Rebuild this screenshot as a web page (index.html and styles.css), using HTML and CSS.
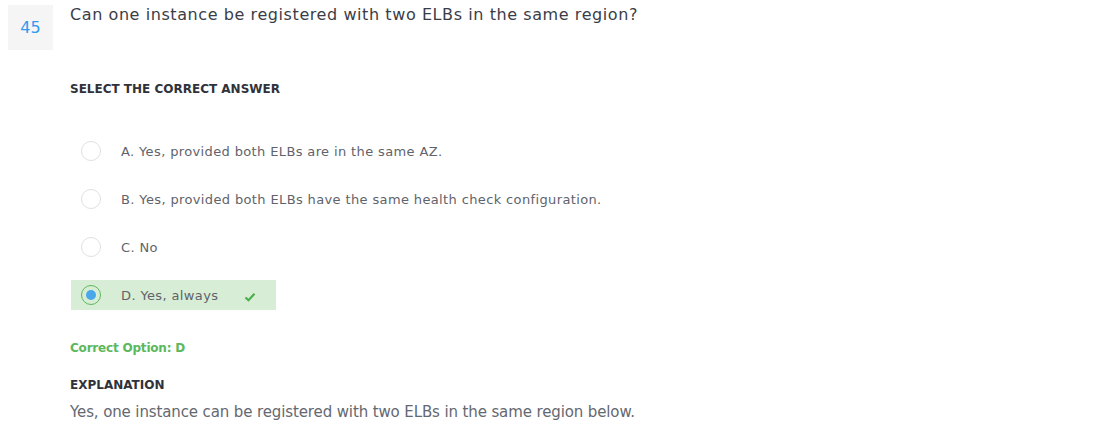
FILE: index.html
```html
<!DOCTYPE html>
<html>
<head>
<meta charset="utf-8">
<link rel="stylesheet" href="styles.css">
</head>
<body>
<div class="question">
  <div class="qnum">45</div>
  <div class="qbody">
    <div class="qtext">Can one instance be registered with two ELBs in the same region?</div>
    <div class="label select-label">SELECT THE CORRECT ANSWER</div>
    <ul class="options">
      <li class="option"><span class="radio"></span><span class="otext">A. Yes, provided both ELBs are in the same AZ.</span></li>
      <li class="option"><span class="radio"></span><span class="otext">B. Yes, provided both ELBs have the same health check configuration.</span></li>
      <li class="option"><span class="radio"></span><span class="otext">C. No</span></li>
      <li class="option correct"><span class="radio checked"><span class="dot"></span></span><span class="otext">D. Yes, always</span>
        <svg class="check" width="12" height="10" viewBox="0 0 12 10"><path d="M1.5 5.5 L4.5 8.3 L10.5 1.8" fill="none" stroke="#4cae4c" stroke-width="2.2"/></svg>
      </li>
    </ul>
    <div class="correct-opt">Correct Option: D</div>
    <div class="label expl-label">EXPLANATION</div>
    <div class="expl">Yes, one instance can be registered with two ELBs in the same region below.</div>
  </div>
</div>
</body>
</html>
```
FILE: styles.css
```css
* { box-sizing: border-box; }
body {
  margin: 0;
  background: #fff;
  font-family: "DejaVu Sans", sans-serif;
}
.question {
  display: flex;
  padding: 5px 0 0 8px;
}
.qnum {
  width: 45px;
  height: 45px;
  background: #f5f5f5;
  color: #3399ee;
  font-size: 16px;
  display: flex;
  align-items: center;
  justify-content: center;
  flex: none;
}
.qbody {
  margin-left: 17px;
}
.qtext {
  font-size: 16px;
  letter-spacing: 0.58px;
  color: #3a3d48;
  line-height: 20px;
}
.label {
  font-size: 12px;
  font-weight: 700;
  color: #2f323a;
}
.select-label {
  margin-top: 56px;
  line-height: 16px;
}
.options {
  list-style: none;
  margin: 39px 0 0 1px;
  padding: 0;
}
.option {
  display: flex;
  align-items: center;
  height: 30px;
  margin-bottom: 18px;
  padding-left: 10px;
  font-size: 13px;
  letter-spacing: 0.37px;
  color: #5f636b;
}
.option.correct {
  background: #d8edd5;
  width: 205px;
}
.radio {
  width: 20px;
  height: 20px;
  border: 1px solid #e0e0e0;
  border-radius: 50%;
  display: flex;
  align-items: center;
  justify-content: center;
  flex: none;
}
.radio.checked {
  border-color: #5cb85c;
}
.dot {
  width: 10px;
  height: 10px;
  border-radius: 50%;
  background: #4aa8ea;
}
.otext {
  margin-left: 20px;
}
.check {
  margin-left: 26px;
  margin-top: 4px;
}
.correct-opt {
  margin-top: 30px;
  font-size: 12px;
  font-weight: 600;
  letter-spacing: -0.2px;
  color: #5cb85c;
  line-height: 16px;
}
.expl-label {
  margin-top: 21px;
  line-height: 16px;
}
.expl {
  margin-top: 9px;
  font-size: 15px;
  letter-spacing: -0.12px;
  color: #646870;
  line-height: 20px;
}
```
